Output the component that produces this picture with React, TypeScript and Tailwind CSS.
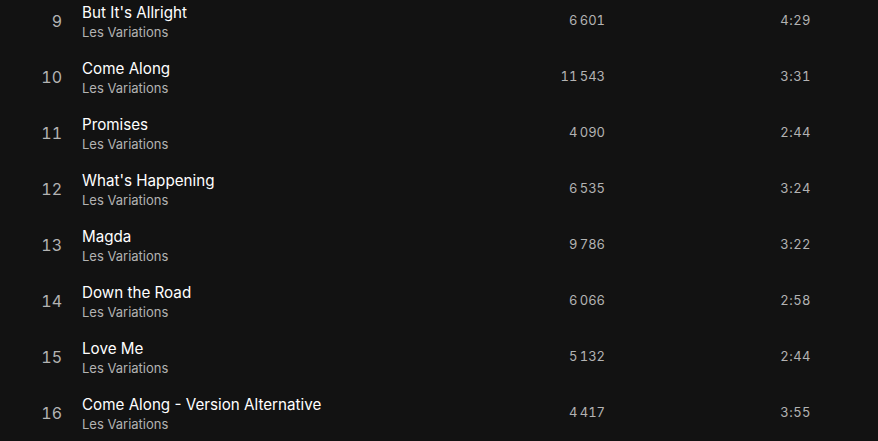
import React from "react";

const tracks = [
  { n: 9, title: "But It's Allright", plays: "6\u202f601", dur: "4:29" },
  { n: 10, title: "Come Along", plays: "11\u202f543", dur: "3:31" },
  { n: 11, title: "Promises", plays: "4\u202f090", dur: "2:44" },
  { n: 12, title: "What's Happening", plays: "6\u202f535", dur: "3:24" },
  { n: 13, title: "Magda", plays: "9\u202f786", dur: "3:22" },
  { n: 14, title: "Down the Road", plays: "6\u202f066", dur: "2:58" },
  { n: 15, title: "Love Me", plays: "5\u202f132", dur: "2:44" },
  { n: 16, title: "Come Along - Version Alternative", plays: "4\u202f417", dur: "3:55" },
];

export default function App() {
  return (
    <div
      className="w-[878px] h-[441px] overflow-hidden bg-[#121212]"
      style={{ fontFamily: "Inter, 'Noto Sans', sans-serif" }}
    >
      <div className="-mt-[7px] flex flex-col">
        {tracks.map((t) => (
          <div key={t.n} className="flex h-[56px] items-center">
            <div className="w-[62px] text-right text-[16px] text-[#b3b3b3] tabular-nums">
              {t.n}
            </div>
            <div className="ml-[20px] flex w-[400px] flex-col">
              <div className="text-[15.2px] leading-[22px] text-white">{t.title}</div>
              <div className="text-[13px] leading-[16px] text-[#b3b3b3]">Les Variations</div>
            </div>
            <div className="w-[123px] text-right text-[13px] text-[#b3b3b3] tabular-nums">
              {t.plays}
            </div>
            <div className="w-[206px] text-right text-[13px] text-[#b3b3b3] tabular-nums tracking-[0.5px]">
              {t.dur}
            </div>
          </div>
        ))}
      </div>
    </div>
  );
}
